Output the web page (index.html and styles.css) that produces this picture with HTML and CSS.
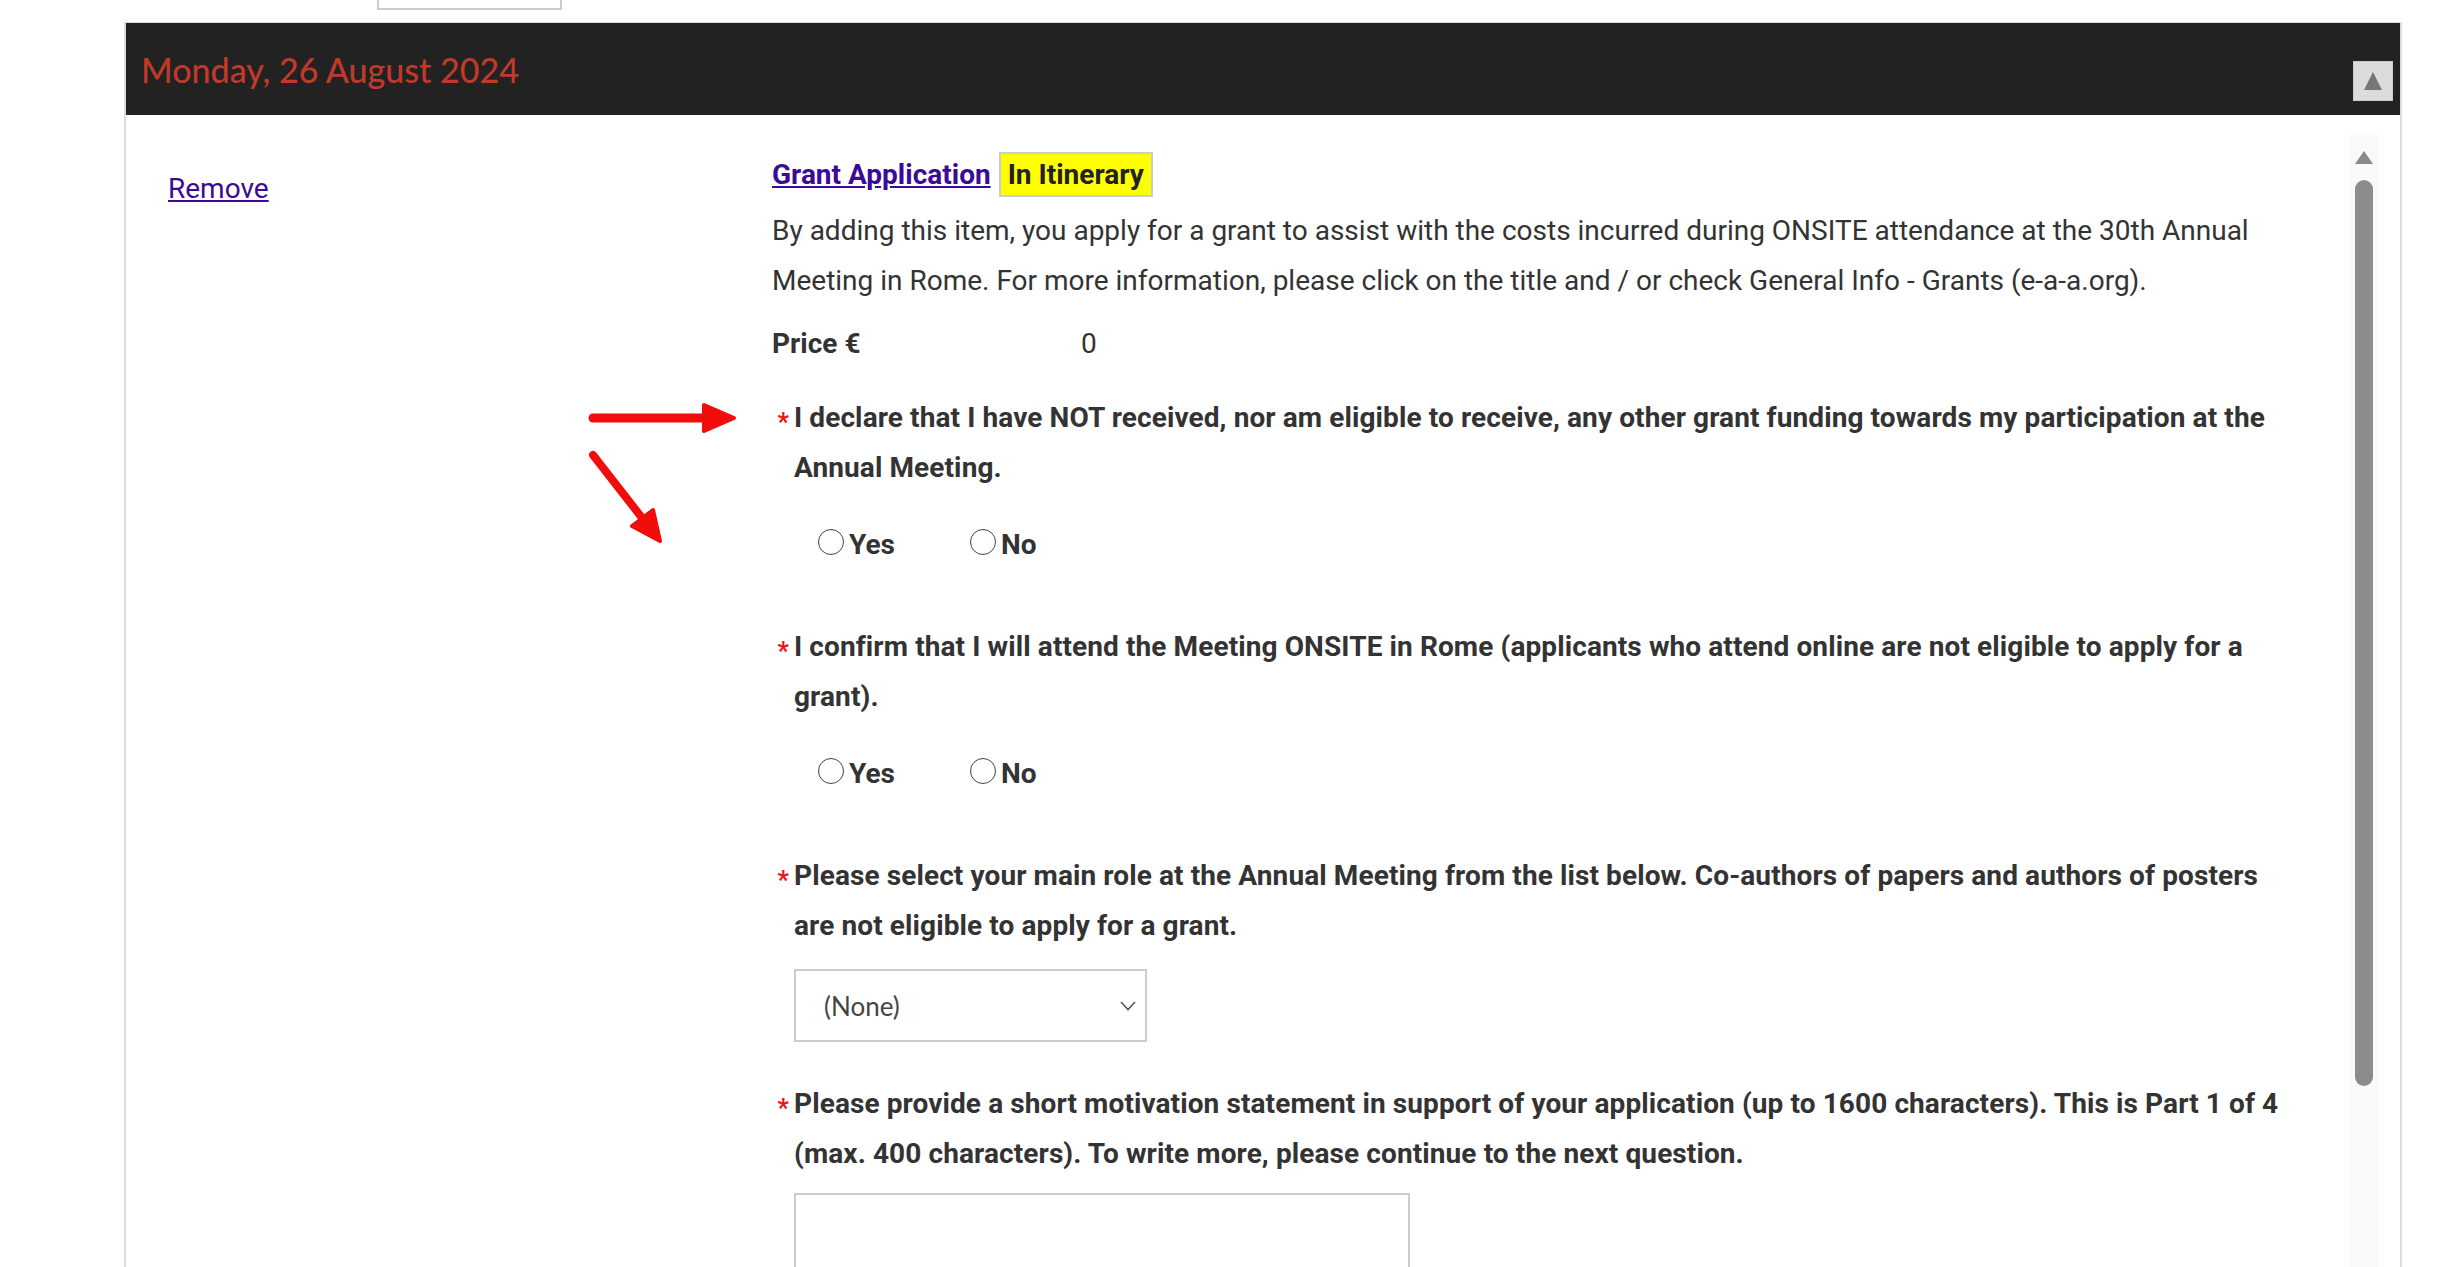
FILE: index.html
```html
<!DOCTYPE html>
<html lang="en">

<head>
  <meta charset="UTF-8">
  <meta name="viewport" content="width=device-width, initial-scale=1.0">
  <title>Itinerary</title>
  <link rel="stylesheet" href="styles.css">
</head>

<body>
  <div class="top-box"></div>

  <div class="day">
    <div class="day-head">
      <h2 class="day-title">Monday, 26 August 2024</h2>
      <button class="collapse" title="Collapse"><span class="tri"></span></button>
    </div>

    <div class="day-body">
      <div class="item">
        <div class="item-side">
          <a href="#" class="remove">Remove</a>
        </div>

        <div class="item-main">
          <div class="item-title">
            <a href="#" class="title-link">Grant Application</a>
            <span class="badge">In Itinerary</span>
          </div>
          <p class="desc">By adding this item, you apply for a grant to assist with the costs incurred during ONSITE attendance at the 30th Annual Meeting in Rome. For more information, please click on the title and / or check General Info - Grants (e-a-a.org).</p>
          <div class="price">
            <span class="price-label">Price €</span>
            <span class="price-value">0</span>
          </div>

          <div class="question">
            <div class="q-label"><span class="req">*</span><span class="q-text">I declare that I have NOT received, nor am eligible to receive, any other grant funding towards my participation at the Annual Meeting.</span></div>
            <div class="radios">
              <label class="radio"><input type="radio" name="q1">Yes</label>
              <label class="radio"><input type="radio" name="q1">No</label>
            </div>
          </div>

          <div class="question">
            <div class="q-label"><span class="req">*</span><span class="q-text">I confirm that I will attend the Meeting ONSITE in Rome (applicants who attend online are not eligible to apply for a grant).</span></div>
            <div class="radios">
              <label class="radio"><input type="radio" name="q2">Yes</label>
              <label class="radio"><input type="radio" name="q2">No</label>
            </div>
          </div>

          <div class="question">
            <div class="q-label"><span class="req">*</span><span class="q-text">Please select your main role at the Annual Meeting from the list below. Co-authors of papers and authors of posters are not eligible to apply for a grant.</span></div>
            <div class="select-wrap">
              <select class="role">
                <option>(None)</option>
                <option>Session organiser</option>
                <option>Paper presenter</option>
              </select>
              <svg class="chevron" width="16" height="10" viewBox="0 0 16 10"><path d="M1 1 L8 8.5 L15 1" fill="none" stroke="#555" stroke-width="1.6"/></svg>
            </div>
          </div>

          <div class="question">
            <div class="q-label"><span class="req">*</span><span class="q-text">Please provide a short motivation statement in support of your application (up to 1600 characters). This is Part 1 of 4 (max. 400 characters). To write more, please continue to the next question.</span></div>
            <textarea class="motivation"></textarea>
          </div>
        </div>
      </div>

      <div class="scrollbar">
        <span class="scroll-up"></span>
        <div class="scroll-thumb"></div>
      </div>

      <svg class="arrows" width="170" height="160" viewBox="0 0 170 160">
        <g fill="#f20d0d" stroke="#f20d0d" stroke-linecap="round" stroke-linejoin="round">
          <line x1="13" y1="23" x2="128" y2="23" stroke-width="9"/>
          <polygon points="124,10 154,23 124,36" stroke-width="4"/>
          <line x1="13" y1="60" x2="66" y2="128" stroke-width="8"/>
          <polygon points="80,146 52,131 73,115" stroke-width="4"/>
        </g>
      </svg>
    </div>
  </div>
</body>

</html>
```

FILE: styles.css
```css
html, body {
  height: 1267px;
  overflow: hidden;
}

body {
  margin: 0;
  background-color: #fff;
  font-family: Roboto, "Liberation Sans", sans-serif;
  font-size: 28px;
  color: #333;
}

.top-box {
  width: 181px;
  height: 8px;
  margin-left: 377px;
  border: 2px solid #ccc;
  border-top: none;
}

.day {
  margin: 12px 0 0 124px;
  width: 2274px;
  border: 2px solid #ddd;
  border-top: 1px solid #ddd;
}

.day-head {
  display: flex;
  justify-content: space-between;
  align-items: center;
  height: 92px;
  background-color: #222;
}

.day-title {
  margin: 0 0 0 15px;
  font-family: Lato, "Open Sans", sans-serif;
  font-weight: 500;
  font-size: 34px;
  color: #c0392b;
}

.collapse {
  align-self: flex-end;
  width: 40px;
  height: 40px;
  margin: 0 7px 14px 0;
  padding: 0;
  display: flex;
  justify-content: center;
  align-items: center;
  background-color: #dcdcdc;
  border: 1px solid #ccc;
  cursor: pointer;
}

.collapse .tri {
  width: 0;
  height: 0;
  border-left: 9px solid transparent;
  border-right: 9px solid transparent;
  border-bottom: 18px solid #777;
}

.day-body {
  position: relative;
  display: flex;
  min-height: 1300px;
}

.item {
  flex: 1;
  display: grid;
  grid-template-columns: 604px 1fr;
  padding: 34px 59px 0 42px;
  align-content: start;
}

.remove {
  display: inline-block;
  margin-top: 15px;
  line-height: 50px;
  color: #3b0a96;
}

.item-title {
  display: flex;
  align-items: center;
  gap: 8px;
  height: 50px;
}

.title-link {
  font-weight: bold;
  color: #3b0a96;
}

.badge {
  display: flex;
  align-items: center;
  height: 41px;
  padding: 0 7px;
  background-color: #ffff00;
  border: 2px solid #ccc;
  font-weight: bold;
  color: #222;
}

.desc {
  margin: 7px 0 0;
  line-height: 50px;
}

.price {
  display: flex;
  margin-top: 13px;
  line-height: 50px;
}

.price-label {
  width: 309px;
  font-weight: bold;
}

.question {
  margin-top: 24px;
}

.q-label {
  display: flex;
  line-height: 50px;
  font-weight: bold;
  letter-spacing: 0.1px;
}

.req {
  flex: none;
  width: 17px;
  padding-right: 5px;
  text-align: right;
  font-size: 25px;
  line-height: 50px;
  color: #e8141c;
  position: relative;
  top: 5px;
}

.q-text {
  flex: 1;
}

.radios {
  display: flex;
  gap: 75px;
  height: 50px;
  align-items: center;
  margin: 26px 0 53px 46px;
  font-weight: bold;
}

.radio {
  display: flex;
  align-items: center;
  gap: 5px;
  cursor: pointer;
}

.radio input {
  appearance: none;
  width: 26px;
  height: 26px;
  margin: 0;
  border: 1.5px solid #444;
  border-radius: 50%;
  background-color: #fff;
  position: relative;
  top: -2px;
}

.select-wrap {
  position: relative;
  width: 353px;
  margin: 18px 0 37px 22px;
}

.role {
  appearance: none;
  width: 353px;
  height: 73px;
  padding: 0 40px 0 28px;
  border: 2px solid #ccc;
  background-color: #fff;
  font-family: Lato, "Open Sans", sans-serif;
  font-size: 26px;
  color: #444;
}

.chevron {
  position: absolute;
  right: 11px;
  top: 32px;
  pointer-events: none;
}

.motivation {
  display: block;
  width: 616px;
  height: 160px;
  margin: 14px 0 0 22px;
  border: 2px solid #ccc;
  resize: none;
  box-sizing: border-box;
}

.scrollbar {
  flex: none;
  width: 30px;
  margin: 20px 21px 0 0;
  display: flex;
  flex-direction: column;
  align-items: center;
  background-color: #fafafa;
}

.scroll-up {
  margin-top: 16px;
  width: 0;
  height: 0;
  border-left: 9px solid transparent;
  border-right: 9px solid transparent;
  border-bottom: 13px solid #8a8a8a;
}

.scroll-thumb {
  width: 18px;
  height: 906px;
  margin-top: 16px;
  border-radius: 9px;
  background-color: #8c8c8c;
}

.arrows {
  position: absolute;
  left: 454px;
  top: 280px;
}
```
